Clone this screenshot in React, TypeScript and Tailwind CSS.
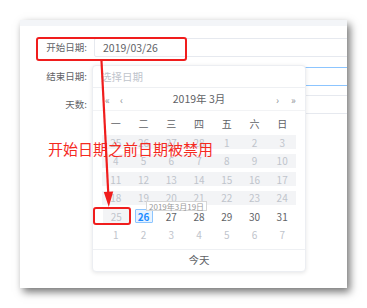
import React from "react";

const F = { fontFamily: '"Noto Sans CJK SC", "Noto Sans", sans-serif' };

type Cell = { d: number; t: "dis" | "norm" | "sel" | "next" };

const rows: Cell[][] = [
  [25, 26, 27, 28, 1, 2, 3].map((d) => ({ d, t: "dis" as const })),
  [4, 5, 6, 7, 8, 9, 10].map((d) => ({ d, t: "dis" as const })),
  [11, 12, 13, 14, 15, 16, 17].map((d) => ({ d, t: "dis" as const })),
  [18, 19, 20, 21, 22, 23, 24].map((d) => ({ d, t: "dis" as const })),
  [
    { d: 25, t: "dis" },
    { d: 26, t: "sel" },
    { d: 27, t: "norm" },
    { d: 28, t: "norm" },
    { d: 29, t: "norm" },
    { d: 30, t: "norm" },
    { d: 31, t: "norm" },
  ],
  [1, 2, 3, 4, 5, 6, 7].map((d) => ({ d, t: "next" as const })),
];

const weeks = ["一", "二", "三", "四", "五", "六", "日"];

function DayCell({ c, band }: { c: Cell; band: boolean }) {
  if (c.t === "dis") {
    return (
      <div className="flex-1 flex items-center">
        <div className={`w-full h-[14px] flex items-center justify-center text-[#c0c4cc] ${band ? "bg-[#f3f4f6]" : "bg-[#f3f4f6] ml-[1px]"}`}>
          {c.d}
        </div>
      </div>
    );
  }
  if (c.t === "sel") {
    return (
      <div className="flex-1 flex items-center justify-center">
        <div className="w-[18px] h-[14px] flex items-center justify-center border border-[#8cc5ff] bg-[#e8f3ff] text-[#1e8bff] font-bold rounded-[1px]">
          {c.d}
        </div>
      </div>
    );
  }
  return (
    <div className={`flex-1 flex items-center justify-center ${c.t === "next" ? "text-[#c0c4cc]" : "text-[#606266]"}`}>
      {c.d}
    </div>
  );
}

export default function App() {
  return (
    <div className="w-[367px] h-[308px] bg-white relative overflow-hidden" style={F}>
      <div className="pl-[20px] pt-[20px]">
        <div className="w-[327px] h-[268px] bg-white relative overflow-hidden shadow-[3px_4px_8px_rgba(0,0,0,0.55)]">
          <div className="h-[6px] bg-[#f3f5f8]" />
          <div className="flex flex-col pt-[12px]">
            <div className="flex items-center h-[19px]">
              <div className="w-[68px] shrink-0 text-right text-[9.5px] text-[#606266] pr-[1px]">开始日期:</div>
              <div className="ml-[6px] w-[280px] shrink-0 h-[19px] border border-[#e6e9ef] rounded-[2px] flex items-center pl-[8px] text-[10.5px] text-[#606266]">
                2019/03/26
              </div>
            </div>
            <div className="flex items-center h-[19px] mt-[10px]">
              <div className="w-[68px] shrink-0 text-right text-[9.5px] text-[#606266] pr-[1px]">结束日期:</div>
              <div className="ml-[6px] w-[280px] shrink-0 h-[19px] border border-[#8cc5ff] rounded-[2px]" />
            </div>
            <div className="flex items-center h-[19px] mt-[9px]">
              <div className="w-[68px] shrink-0 text-right text-[9.5px] text-[#606266] pr-[1px]">天数:</div>
              <div className="ml-[6px] w-[280px] shrink-0 h-[19px] border border-[#e6e9ef] rounded-[2px]" />
            </div>
          </div>

          {/* date picker popup */}
          <div className="absolute left-[72px] top-[45px] w-[214px] h-[207px] bg-white border border-[#eceef2] rounded-[4px] shadow-[0_1px_4px_rgba(0,0,0,0.1)] flex flex-col text-[10px]">
            <div className="h-[22px] border-b border-[#eef0f3] flex items-center pl-[8px] text-[10.5px] text-[#c0c4cc]">选择日期</div>
            <div className="h-[23px] border-b border-[#f2f3f5] flex items-center text-[#909399] relative">
              <span className="absolute left-[12px] text-[10px]">«</span>
              <span className="absolute left-[27px] text-[10px]">‹</span>
              <span className="w-full text-center text-[10.5px] text-[#606266]">2019年 3月</span>
              <span className="absolute left-[183px] text-[10px]">›</span>
              <span className="absolute left-[198px] text-[10px]">»</span>
            </div>
            <div className="px-[9px] pt-[3.5px] pb-[4.5px] flex flex-col">
              <div className="flex h-[18.5px] items-center text-[#606266]">
                {weeks.map((w) => (
                  <div key={w} className="flex-1 text-center">{w}</div>
                ))}
              </div>
              {rows.map((r, i) => (
                <div key={i} className="flex h-[18.5px]">
                  {r.map((c, j) => (
                    <DayCell key={j} c={c} band={i < 4} />
                  ))}
                </div>
              ))}
            </div>
            <div className="flex-1 border-t border-[#eef0f3] flex items-center justify-center text-[10.5px] text-[#606266]">今天</div>
          </div>
        </div>
      </div>

      {/* tooltip */}
      <div className="absolute left-[146px] top-[201px] h-[10px] px-[2px] border border-[#d6d6d6] bg-white/90 text-[8px] leading-[9px] text-[#9a9a9a] flex items-center">
        2019年3月19日
      </div>

      {/* annotations */}
      <div className="absolute left-[36px] top-[37px] w-[151px] h-[24px] border-2 border-[#f01d1d] rounded-[3px]" />
      <div className="absolute left-[93px] top-[207px] w-[38px] h-[18px] border-2 border-[#f01d1d] rounded-[3px]" />
      <div className="absolute left-[48px] top-[139px] text-[15px] leading-[20px] text-[#f52a1f] whitespace-nowrap">开始日期之前日期被禁用</div>
      <svg className="absolute left-0 top-0 pointer-events-none" width="367" height="308" viewBox="0 0 367 308">
        <path d="M101.5 61 L108.3 194" stroke="#f01d1d" strokeWidth="2.2" fill="none" />
        <polygon points="103.8,192 113.2,191.6 108.8,207" fill="#f01d1d" />
      </svg>
    </div>
  );
}
